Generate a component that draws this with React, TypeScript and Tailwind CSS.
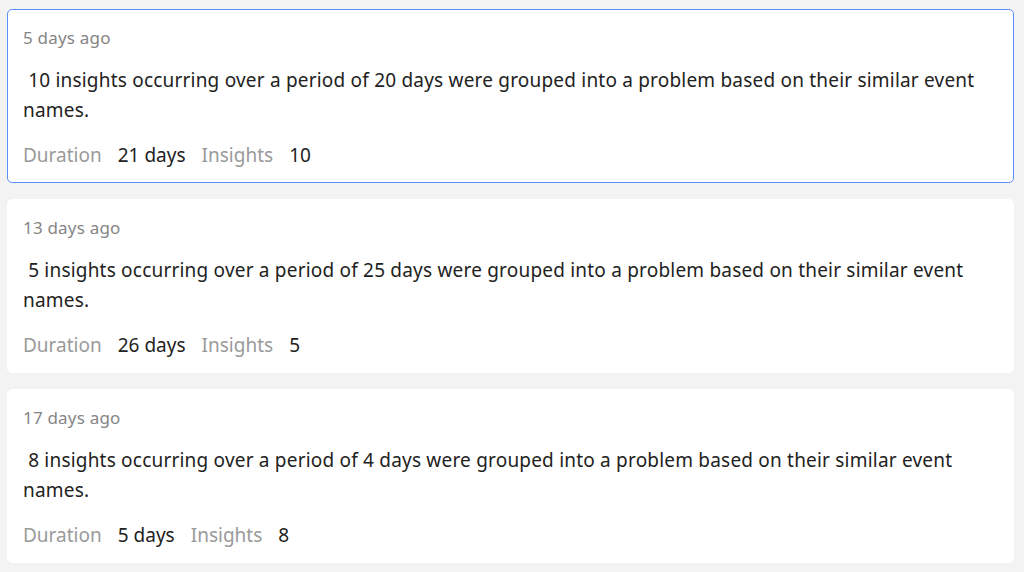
import React from "react";

const items = [
  { ago: "5 days ago", n: 10, period: 20, duration: "21 days", selected: true },
  { ago: "13 days ago", n: 5, period: 25, duration: "26 days", selected: false },
  { ago: "17 days ago", n: 8, period: 4, duration: "5 days", selected: false },
];

export default function App() {
  return (
    <div
      className="w-[1024px] h-[572px] bg-[#f3f3f3] overflow-hidden pt-[9px] pl-[7px] pr-[10px] flex flex-col gap-[16px]"
      style={{ fontFamily: "'Noto Sans', sans-serif" }}
    >
      {items.map((it) => (
        <div
          key={it.ago}
          className={
            it.selected
              ? "bg-white rounded-[5px] border border-[#5b8ef7] pt-[18px] pb-[13px] px-[15px]"
              : "bg-white rounded-[5px] border border-white pt-[18px] pb-[13px] px-[15px]"
          }
        >
          <div className="text-[17px] leading-[20px] tracking-[0.2px] text-[#858585]">{it.ago}</div>
          <div className="mt-[17px] text-[19px] leading-[30px] tracking-[0.2px] text-[#222222] whitespace-pre-wrap">
            {` ${it.n} insights occurring over a period of ${it.period} days were grouped into a problem based on their similar event names.`}
          </div>
          <div className="mt-[16px] flex items-center gap-[16px] text-[19px] leading-[28px]">
            <span className="text-[#9a9a9a]">Duration</span>
            <span className="text-[#222222]">{it.duration}</span>
            <span className="text-[#9a9a9a]">Insights</span>
            <span className="text-[#222222]">{it.n}</span>
          </div>
        </div>
      ))}
    </div>
  );
}
